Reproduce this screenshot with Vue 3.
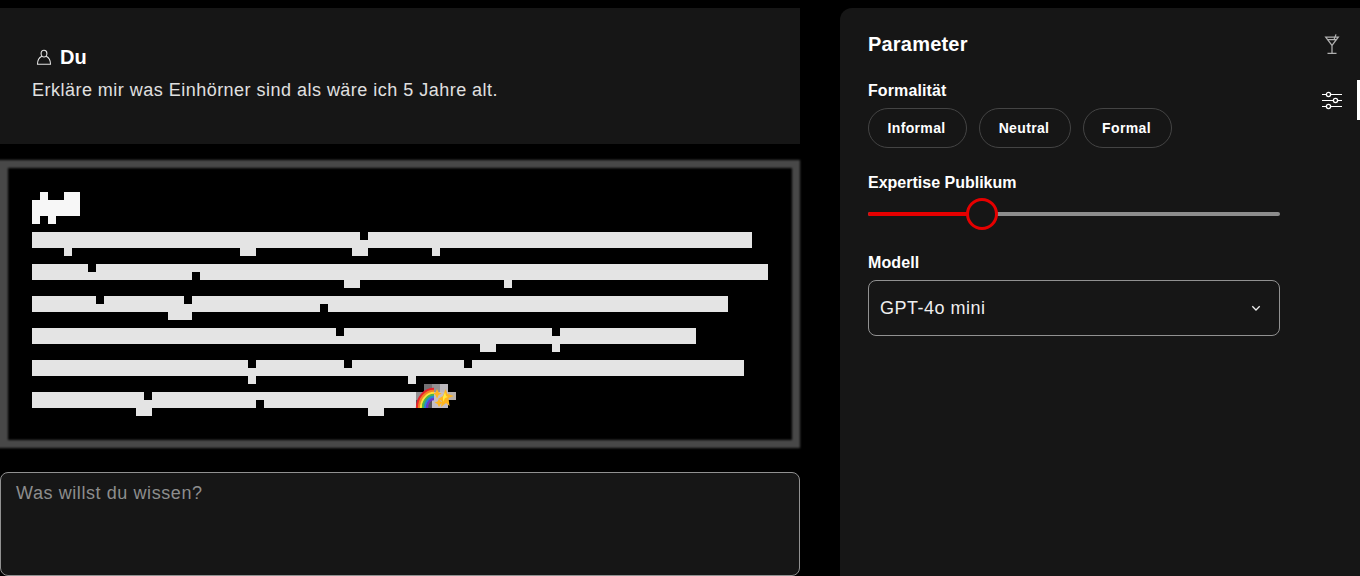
<script setup>
const tones = ['Informal', 'Neutral', 'Formal']
const expertise = 27.6

// Blocks on an 8px grid: [column, row, width, height]
const titleBlocks = [[1, 0, 1, 1], [4, 0, 2, 1], [0, 1, 6, 2], [0, 3, 1, 1], [2, 3, 1, 1]]
const lineBlocks = [
  [0, 5, 41, 1], [42, 5, 48, 1], [0, 6, 90, 1], [4, 7, 1, 1], [26, 7, 2, 1], [40, 7, 2, 1], [50, 7, 1, 1],
  [0, 9, 7, 1], [8, 9, 84, 1], [0, 10, 20, 1], [21, 10, 71, 1], [39, 11, 2, 1], [59, 11, 1, 1],
  [0, 13, 8, 1], [9, 13, 10, 1], [20, 13, 67, 1], [0, 14, 36, 1], [37, 14, 50, 1], [17, 15, 3, 1],
  [0, 17, 38, 1], [39, 17, 26, 1], [66, 17, 17, 1], [0, 18, 83, 1], [56, 19, 2, 1], [65, 19, 1, 1],
  [0, 21, 27, 1], [28, 21, 11, 1], [40, 21, 14, 1], [55, 21, 34, 1], [0, 22, 89, 1], [27, 23, 1, 1], [47, 23, 1, 1],
  [0, 25, 14, 1], [15, 25, 33, 1], [0, 26, 28, 1], [29, 26, 19, 1], [13, 27, 2, 1], [42, 27, 2, 1],
]
const toPath = (blocks) => blocks.map(([x, y, w, h]) => `M${x * 8} ${y * 8}h${w * 8}v${h * 8}h${-w * 8}z`).join('')
const rainbow = [
  [17, '#e8242b'], [15, '#f58220'], [13, '#ffe13a'], [11, '#4cb749'], [9, '#2486d8'], [7, '#6a35c9'],
]
</script>

<template>
  <div class="page">
    <main class="chat">
      <section class="question">
        <h2>
          <svg class="user" width="16" height="18" viewBox="0 0 16 18">
            <path d="M8 2.300c1.900 0 2.900 1.300 2.900 3.100S9.700 9 8 9 5.100 7.200 5.100 5.400 6.100 2.300 8 2.300zM5.800 8.200C3.300 9.300 1.500 12 1.500 16.300h13c0-4.300-1.800-7-4.300-8.100" />
          </svg>
          <span>Du</span>
        </h2>
        <p>Erkläre mir was Einhörner sind als wäre ich 5 Jahre alt.</p>
      </section>

      <section class="answer">
        <svg width="744" height="224" viewBox="0 0 744 224" shape-rendering="crispEdges">
          <path :d="toPath(titleBlocks)" fill="#f7f7f7" />
          <path :d="toPath(lineBlocks)" fill="#e4e4e4" />
          <path d="M392 192h8v8h-8z" fill="#747174" />
          <path d="M400 192h8v8h-8zM384 200h8v8h-8z" fill="#939193" />
          <path d="M408 192h8v8h-8z" fill="#bcb8bd" />
          <path d="M400 200h16v16h-16z" fill="#c5bfc5" />
          <path d="M416 200h8v8h-8z" fill="#b8b1ad" />
          <path d="M384 208h8v8h-8zM392 200h8v16h-8z" fill="#555158" />
          <g fill="none" stroke-width="2.300" shape-rendering="auto">
            <path v-for="[r, color] in rainbow" :key="r" :d="`M${402 - r} 216A${r} ${r + 2} 0 0 1 402 ${214 - r}`" :stroke="color" />
          </g>
          <g fill="#ffb51f" shape-rendering="auto">
            <path d="M413.500 197l2 5 6.500 2-5.500 2 1 8-3.500-3-5 4 1-6-4-2 5-3z" />
            <path d="M405 197l1.700 3.500 3 1-3 1.500-1.700 3.500-1.500-3.500-2-1.500 2-1zM407 207l1.700 2.500 3 1-3 1.500-1.700 3-1.500-3-3-1.500 3-1z" />
            <path d="M413 200l1 4 2 1-3 1-2 4 0-5z" fill="#ffec45" />
          </g>
        </svg>
      </section>

      <textarea class="prompt" placeholder="Was willst du wissen?"></textarea>
    </main>

    <aside class="panel">
      <div class="settings">
        <h2>Parameter</h2>
        <h3 class="tone-label">Formalität</h3>
        <div class="tones">
          <button v-for="tone in tones" :key="tone" :class="tone.toLowerCase()">{{ tone }}</button>
        </div>
        <h3 class="expertise-label">Expertise Publikum</h3>
        <div class="slider">
          <div class="fill" :style="{ width: expertise + '%' }"></div>
          <div class="thumb" :style="{ left: expertise + '%' }"></div>
        </div>
        <h3 class="model-label">Modell</h3>
        <div class="select">
          <span>GPT-4o mini</span>
          <svg width="10" height="8" viewBox="0 0 10 8"><path d="M1.300 2.300L5 6l3.700-3.700" /></svg>
        </div>
      </div>
      <nav class="rail">
        <div class="tab muted">
          <svg width="24" height="24" viewBox="0 0 24 24">
            <path d="M5.700 5.200h12.600L12 13.500zM7.300 7.500h9.400M12 13.500v7.700M7.500 21.300h9M13.800 8.300l2.200-5.900" />
          </svg>
        </div>
        <div class="tab active">
          <svg width="24" height="24" viewBox="0 0 24 24">
            <path d="M2 6.500h4.500M10.500 6.500H22M2 12.500h11.500M17.500 12.500H22M2 18.500h4.500M10.500 18.500H22" />
            <circle cx="8.500" cy="6.500" r="2.100" /><circle cx="15.500" cy="12.500" r="2.100" /><circle cx="8.500" cy="18.500" r="2.100" />
          </svg>
        </div>
      </nav>
    </aside>
  </div>
</template>

<style>
body {
  background: #000;
  overflow: hidden;
}
</style>

<style scoped>
* {
  box-sizing: border-box;
}
.page {
  display: flex;
  gap: 40px;
  width: 1360px;
  height: 576px;
  padding-top: 8px;
  background: #000;
  color: #fff;
  font-family: "Liberation Sans", Arial, sans-serif;
}
h2, h3, p {
  margin: 0;
}
.chat {
  display: flex;
  flex-direction: column;
  width: 800px;
}
.question {
  height: 136px;
  padding: 36px 32px 0;
  background: #161616;
}
.question h2 {
  display: flex;
  align-items: center;
  gap: 8px;
  padding-left: 4px;
  font-size: 20px;
  line-height: 26px;
}
.user {
  fill: none;
  stroke: #e4e4e4;
  stroke-width: 1.1;
}
.question p {
  margin-top: 7px;
  color: #e0e0e0;
  font-size: 18px;
  line-height: 26px;
  letter-spacing: 0.48px;
  white-space: nowrap;
}
.answer {
  position: relative;
  height: 288px;
  margin-top: 16px;
  padding: 32px;
}
.answer::before {
  content: "";
  position: absolute;
  inset: 0 0 0 -8px;
  border: 8px solid #484848;
  border-left-width: 16px;
  filter: blur(1.3px);
}
.answer svg {
  position: relative;
  display: block;
}
.prompt {
  display: block;
  height: 104px;
  margin: 24px 0 0;
  padding: 7px 15px;
  border: 1px solid #919191;
  border-radius: 8px;
  outline: none;
  resize: none;
  background: #161616;
  font: 18px/26px "Liberation Sans", Arial, sans-serif;
  letter-spacing: 0.58px;
}
.prompt::placeholder {
  color: #8d8d8d;
  opacity: 1;
}
.panel {
  display: flex;
  flex: 1;
  justify-content: space-between;
  padding-left: 28px;
  border-radius: 12px 0 0;
  background: #161616;
}
.settings {
  width: 412px;
  padding-top: 23px;
}
.settings h2 {
  font-size: 20px;
  line-height: 26px;
  letter-spacing: 0.2px;
}
.settings h3 {
  font-size: 16px;
  line-height: 20px;
}
.settings .tone-label {
  margin-top: 24px;
  letter-spacing: 0.1px;
}
.tones {
  display: flex;
  gap: 12px;
  margin-top: 7px;
}
.tones button {
  height: 40px;
  padding: 0 2px 0 0;
  border: 1px solid #444;
  border-radius: 20px;
  background: none;
  color: #fff;
  font: bold 14px "Liberation Sans", Arial, sans-serif;
  letter-spacing: 0.35px;
}
.informal {
  width: 99px;
}
.neutral {
  width: 92px;
}
.formal {
  width: 89px;
}
.expertise-label {
  margin-top: 25px;
}
.slider {
  position: relative;
  height: 4px;
  margin-top: 19px;
  border-radius: 2px;
  background: #8d8d8d;
}
.fill {
  height: 4px;
  border-radius: 2px;
  background: #e60000;
}
.thumb {
  position: absolute;
  top: -14px;
  width: 32px;
  height: 32px;
  margin-left: -16px;
  border: 3px solid #e60000;
  border-radius: 50%;
  background: #161616;
}
.model-label {
  margin-top: 37px;
}
.settings .model-label {
  letter-spacing: 0.1px;
}
.select {
  display: flex;
  align-items: center;
  justify-content: space-between;
  height: 56px;
  margin-top: 7px;
  padding: 0 18px 0 11px;
  border: 1px solid #919191;
  border-radius: 8px;
  color: #eee;
  font-size: 18px;
  letter-spacing: 0.5px;
}
.select svg {
  fill: none;
  stroke: #eee;
  stroke-width: 1.3;
}
.rail {
  display: flex;
  flex-direction: column;
  gap: 16px;
  width: 40px;
  padding-top: 16px;
}
.tab {
  display: flex;
  align-items: center;
  height: 40px;
  border-right: 3px solid transparent;
}
.tab svg {
  fill: none;
  stroke: #fff;
  stroke-width: 1.100;
}
.tab circle {
  stroke-width: 1.3;
}
.tab.muted svg {
  stroke: #b0b0b0;
  stroke-width: 1.25;
}
.active {
  border-right-color: #fff;
}
</style>
